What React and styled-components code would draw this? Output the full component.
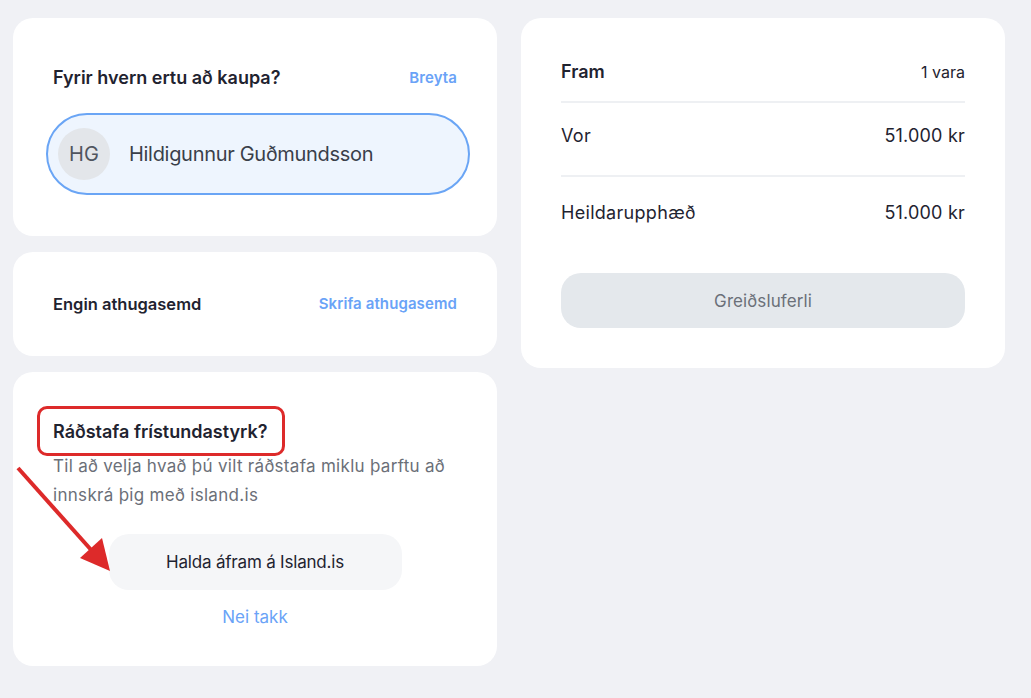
import React from 'react';
import styled, { createGlobalStyle } from 'styled-components';

const GlobalStyle = createGlobalStyle`
    body {
        margin: 0;
        background: #f0f1f5;
        font-family: Inter, "Noto Sans", sans-serif;
        color: #1f2330;
    }
`;

const Page = styled.div`
    display: grid;
    grid-template-columns: 484px 484px;
    column-gap: 24px;
    align-items: start;
    padding: 18px 13px;
`;

const Column = styled.div`
    display: flex;
    flex-direction: column;
    gap: 16px;
`;

const Card = styled.div`
    position: relative;
    background: #fff;
    border-radius: 20px;
    padding: ${p => p.pad || '48px 40px 40px'};
    display: flex;
    flex-direction: column;
`;

const HeaderRow = styled.div`
    display: flex;
    justify-content: space-between;
    align-items: center;
    line-height: 24px;
    min-height: ${p => p.h || 24}px;
    width: 100%;
`;

const Heading = styled.span`
    font-size: 18px;
    font-weight: 600;
    letter-spacing: 0;
    color: #1f2330;
`;

const Link = styled.span`
    font-size: 15px;
    font-weight: 600;
    color: #6aa3f7;
    letter-spacing: 0.1px;
`;

const Pill = styled.div`
    margin: 23px -13px 0 -7px;
    height: 82px;
    box-sizing: border-box;
    border: 2px solid #6aa5f5;
    border-radius: 41px;
    background: #eef5fe;
    display: flex;
    align-items: center;
    padding: 0 10px;
    gap: 19px;
`;

const Avatar = styled.div`
    width: 52px;
    height: 52px;
    border-radius: 50%;
    background: #e3e6ea;
    color: #50555f;
    display: flex;
    align-items: center;
    justify-content: center;
    font-size: 20px;
`;

const Name = styled.span`
    font-size: 20px;
    color: #3a3f4a;
    letter-spacing: -0.3px;
`;

const Label = styled.span`
    font-size: 16.5px;
    font-weight: 600;
    color: #1f2330;
`;

const Highlight = styled.div`
    align-self: flex-start;
    position: relative;
    line-height: 24px;
    &::after {
        content: '';
        position: absolute;
        left: -16px;
        right: -18px;
        top: -14px;
        bottom: -12px;
        border: 3.5px solid #dd2a2a;
        border-radius: 10px;
    }
`;

const Description = styled.p`
    margin: 8px 0 0;
    font-size: 17px;
    line-height: 29px;
    color: #6b6f78;
    letter-spacing: 0.3px;
    align-self: stretch;
`;

const SoftButton = styled.div`
    box-sizing: border-box;
    width: ${p => p.w || '100%'};
    height: ${p => p.h || 56}px;
    margin-top: ${p => p.mt || 0}px;
    align-self: center;
    border-radius: 20px;
    background: ${p => p.bg};
    color: ${p => p.fg};
    font-size: 17px;
    letter-spacing: ${p => p.ls || '-0.2px'};
    display: flex;
    align-items: center;
    justify-content: center;
`;

const TextLink = styled.span`
    margin-top: 15px;
    align-self: center;
    line-height: 24px;
    font-size: 17px;
    color: #6aa3f7;
`;

const Row = styled.div`
    display: flex;
    justify-content: space-between;
    align-items: center;
    line-height: 24px;
    padding: ${p => p.pad};
    border-bottom: ${p => (p.divider ? '2px solid #eef0f3' : 'none')};
`;

const RowLabel = styled.span`
    font-size: 18px;
    font-weight: ${p => (p.bold ? 600 : 400)};
    color: #1f2330;
    letter-spacing: ${p => (p.bold ? 0 : 0.3)}px;
`;

const RowValue = styled.span`
    font-size: ${p => p.size || 18}px;
    color: #1f2330;
    letter-spacing: ${p => (p.size ? 0 : 0.2)}px;
`;

const Arrow = styled.svg`
    position: absolute;
    left: 0;
    top: 0;
    overflow: visible;
    pointer-events: none;
`;

export default function App() {
    return (
        <>
            <GlobalStyle />
            <Page>
                <Column>
                    <Card pad="48px 40px 41px">
                        <HeaderRow>
                            <Heading>Fyrir hvern ertu að kaupa?</Heading>
                            <Link>Breyta</Link>
                        </HeaderRow>
                        <Pill>
                            <Avatar>HG</Avatar>
                            <Name>Hildigunnur Guðmundsson</Name>
                        </Pill>
                    </Card>

                    <Card pad="0 40px">
                        <HeaderRow h={104}>
                            <Label>Engin athugasemd</Label>
                            <Link>Skrifa athugasemd</Link>
                        </HeaderRow>
                    </Card>

                    <Card pad="48px 40px 37px">
                        <Highlight>
                            <Heading>Ráðstafa frístundastyrk?</Heading>
                        </Highlight>
                        <Description>
                            Til að velja hvað þú vilt ráðstafa miklu þarftu að innskrá þig með island.is
                        </Description>
                        <SoftButton w="293px" mt={24} bg="#f5f6f8" fg="#1f2330">
                            Halda áfram á Island.is
                        </SoftButton>
                        <TextLink>Nei takk</TextLink>
                        <Arrow width="1" height="1">
                            <line x1="5" y1="96" x2="80" y2="180" stroke="#dd2a2a" strokeWidth="4" />
                            <polygon points="97,199 67,186 89,166" fill="#dd2a2a" />
                        </Arrow>
                    </Card>
                </Column>

                <Card pad="42px 40px 40px">
                    <Row pad="0 0 17px" divider>
                        <RowLabel bold>Fram</RowLabel>
                        <RowValue size={16}>1 vara</RowValue>
                    </Row>
                    <Row pad="21px 0 27px" divider>
                        <RowLabel>Vor</RowLabel>
                        <RowValue>51.000 kr</RowValue>
                    </Row>
                    <Row pad="24px 0 0">
                        <RowLabel>Heildarupphæð</RowLabel>
                        <RowValue>51.000 kr</RowValue>
                    </Row>
                    <SoftButton h={55} mt={48} bg="#e4e8ec" fg="#6b7079" ls="0.1px">
                        Greiðsluferli
                    </SoftButton>
                </Card>
            </Page>
        </>
    );
}
